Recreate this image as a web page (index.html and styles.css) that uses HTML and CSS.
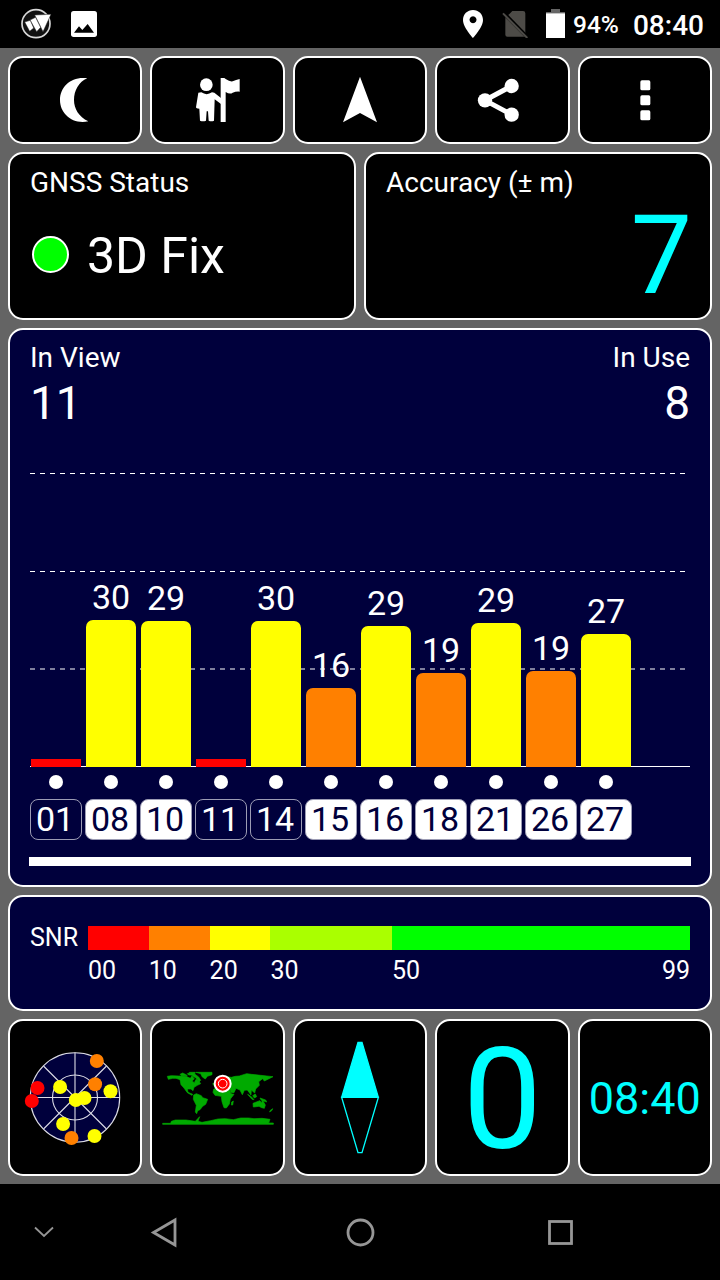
FILE: index.html
```html
<!DOCTYPE html>
<html lang="en">
<head>
    <meta charset="UTF-8">
    <meta name="viewport" content="width=device-width, initial-scale=1.0">
    <title>GNSS Status</title>
    <link rel="stylesheet" href="styles.css">
</head>
<body>
    <header class="status-bar">
        <svg class="icon-logo" width="32" height="32" viewBox="0 0 96 96">
            <circle cx="48" cy="47" r="42" fill="#111" stroke="#d8d8d8" stroke-width="5"/>
            <path d="M14 42 L31 37 L41 60 L29 70Z M30 36 L47 28 L62 58 L50 71Z M44 21 L93 19 L69 71Z" fill="#fff" stroke="#222" stroke-width="1.5"/>
        </svg>
        <svg class="icon-image" width="26" height="26" viewBox="0 0 78 78">
            <rect width="78" height="78" rx="8" fill="#fff"/>
            <path d="M9 65 L24 46 L34 57 L50 39 L69 65Z" fill="#000"/>
        </svg>
        <div class="status-right">
            <svg class="icon-pin" width="20" height="28" viewBox="0 0 60 84">
                <path d="M30 0 C13 0 0 13 0 30 C0 52 30 84 30 84 C30 84 60 52 60 30 C60 13 47 0 30 0Z M30 40 A10.500 10.500 0 1 1 30.100 40Z" fill="#fff" fill-rule="evenodd"/>
            </svg>
            <svg class="icon-sim" width="26" height="28" viewBox="0 0 78 84">
                <path d="M10 22 L70 82 V10 Q70 3 63 3 H31 L23 11Z M10 23 V74 Q10 80 16 80 H67Z" fill="#4d4b47"/>
                <path d="M5 7 L79 83" stroke="#000" stroke-width="9"/>
                <path d="M3 10 L76 84" stroke="#4d4b47" stroke-width="6"/>
            </svg>
            <svg class="icon-battery" width="19" height="29" viewBox="0 0 57 87">
                <path d="M15 0 H42 V9 H57 V14 H0 V9 H15Z" fill="#666"/>
                <rect y="13" width="57" height="74" fill="#fff"/>
            </svg>
            <span class="battery-level">94%</span>
            <span class="status-time">08:40</span>
        </div>
    </header>

    <main class="app">
        <div class="row toolbar">
            <button class="card tool" aria-label="Night mode">
                <svg width="48" height="48" viewBox="-1 0 144 144">
                    <path d="M108 7 C60 0 26 32 26 72 C26 112 62 146 111 136 C82 122 68 98 68 72 C68 44 82 18 108 7Z"/>
                </svg>
            </button>
            <button class="card tool" aria-label="Waypoint">
                <svg width="48" height="48" viewBox="2 0 144 144">
                    <circle cx="39" cy="26" r="19"/>
                    <path d="M15 50 L24 49 Q40 60 56 49 L63 50 L83 66 V84 L64 70 L62 134 Q54 138 46 134 L44 106 H40 L38 134 Q29 138 20 134 L18 98 Q8 98 8 94Z"/>
                    <path d="M82 6 H93 L97 9 Q110 18 118 16 Q128 12 139 9 V47 Q128 46 118 50 Q110 56 97 48 V138 H82Z"/>
                </svg>
            </button>
            <button class="card tool" aria-label="Navigate">
                <svg width="48" height="48" viewBox="0 0 144 144">
                    <path d="M72 2 L123 139 L72 111 L21 139Z"/>
                </svg>
            </button>
            <button class="card tool" aria-label="Share">
                <svg width="48" height="48" viewBox="-1 0 144 144">
                    <circle cx="20" cy="73" r="21.500"/>
                    <circle cx="100" cy="30" r="21.500"/>
                    <circle cx="100" cy="116" r="21.500"/>
                    <path d="M100 30 L20 73 L100 116" fill="none" stroke="#fff" stroke-width="15"/>
                </svg>
            </button>
            <button class="card tool" aria-label="More">
                <svg width="48" height="48" viewBox="0 0 144 144">
                    <rect x="58" y="13" width="30" height="30" rx="5"/>
                    <rect x="58" y="58" width="30" height="30" rx="5"/>
                    <rect x="58" y="103" width="30" height="30" rx="5"/>
                </svg>
            </button>
        </div>

        <div class="row summary">
            <section class="card info">
                <h2 class="label">GNSS Status</h2>
                <div class="fix"><span class="fix-dot"></span>3D Fix</div>
            </section>
            <section class="card info">
                <h2 class="label">Accuracy (± m)</h2>
                <div class="accuracy">7</div>
            </section>
        </div>

        <section class="card satellites">
            <div class="counts">
                <div>
                    <div class="label">In View</div>
                    <div class="count">11</div>
                </div>
                <div class="in-use">
                    <div class="label">In Use</div>
                    <div class="count">8</div>
                </div>
            </div>
            <div class="chart">
                <svg class="grid-lines" width="660" height="294" viewBox="0 0 660 294">
                    <path d="M0 1.500 H660 M0 99.500 H660 M0 197 H660" stroke="#fff" stroke-width="1" stroke-dasharray="5 5"/>
                </svg>
                <div class="bars">
                    <div class="sat"><div class="bar red" style="height: 8px"></div></div>
                    <div class="sat"><span class="value">30</span><div class="bar yellow" style="height: 147px"></div></div>
                    <div class="sat"><span class="value">29</span><div class="bar yellow" style="height: 146px"></div></div>
                    <div class="sat"><div class="bar red" style="height: 8px"></div></div>
                    <div class="sat"><span class="value">30</span><div class="bar yellow" style="height: 146px"></div></div>
                    <div class="sat"><span class="value">16</span><div class="bar orange" style="height: 79px"></div></div>
                    <div class="sat"><span class="value">29</span><div class="bar yellow" style="height: 141px"></div></div>
                    <div class="sat"><span class="value">19</span><div class="bar orange" style="height: 94px"></div></div>
                    <div class="sat"><span class="value">29</span><div class="bar yellow" style="height: 144px"></div></div>
                    <div class="sat"><span class="value">19</span><div class="bar orange" style="height: 96px"></div></div>
                    <div class="sat"><span class="value">27</span><div class="bar yellow" style="height: 133px"></div></div>
                </div>
            </div>
            <div class="ids">
                <span class="id">01</span>
                <span class="id used">08</span>
                <span class="id used">10</span>
                <span class="id">11</span>
                <span class="id">14</span>
                <span class="id used">15</span>
                <span class="id used">16</span>
                <span class="id used">18</span>
                <span class="id used">21</span>
                <span class="id used">26</span>
                <span class="id used">27</span>
            </div>
            <div class="scroll-track"></div>
        </section>

        <section class="card snr">
            <span class="snr-label">SNR</span>
            <div class="scale">
                <div class="red"></div>
                <div class="orange"></div>
                <div class="yellow"></div>
                <div class="lime"></div>
                <div class="green"></div>
                <span>00</span>
                <span>10</span>
                <span>20</span>
                <span>30</span>
                <span class="last"><span>50</span><span>99</span></span>
            </div>
        </section>

        <div class="row tiles">
            <div class="card tile">
                <svg width="104" height="104" viewBox="-52 -51.5 104 104">
                    <g fill="#00003c" stroke="#dcdce6" stroke-width="1.1">
                        <circle r="44.700"/>
                        <circle r="22.500"/>
                        <path d="M-45 0 H45 M0 -45 V45 M-31.500 -31.500 L31.500 31.500 M-31.500 31.500 L31.500 -31.500"/>
                    </g>
                    <g fill="#ff8000">
                        <circle cx="21.800" cy="-36.500" r="7"/>
                        <circle cx="20.100" cy="-13.200" r="7"/>
                        <circle cx="-3.500" cy="40.500" r="7"/>
                    </g>
                    <g fill="#ffff00">
                        <circle cx="35.500" cy="-6.200" r="7"/>
                        <circle cx="-14.900" cy="-10.500" r="7"/>
                        <circle cx="0.800" cy="2.500" r="7"/>
                        <circle cx="9.500" cy="0.500" r="7"/>
                        <circle cx="-11.900" cy="26.500" r="7"/>
                        <circle cx="19.500" cy="38.500" r="7"/>
                    </g>
                    <g fill="#ff0000">
                        <circle cx="-37.500" cy="-9.500" r="7"/>
                        <circle cx="-43.200" cy="3.500" r="7"/>
                    </g>
                </svg>
            </div>
            <div class="card tile">
                <svg width="112" height="55" viewBox="50 165 336 165">
                    <g fill="#00aa00" stroke="#00aa00" stroke-width="2">
                        <!-- Americas -->
                        <path d="M66 184 L78 182 L100 183 L122 184 L135 190 L140 182 L147 192 L140 198 L147 203 L152 193 L160 197 L166 206 L156 211 L146 217 L143 227 L137 222 L126 222 L128 232 L142 238 L140 241 L126 233 L116 219 L107 209 L104 194 L92 190 L82 190 L69 193Z"/>
                        <path d="M104 178 L112 174 L122 179 L126 182 L108 182Z M126 176 L132 174 L140 180 L130 180Z M132 172 L150 172 L148 177 L160 186 L166 196 L162 200 L152 189 L143 184Z M152 172 H200 V179 L186 184 L180 192 L171 186 L166 176Z"/>
                        <path d="M145 240 L153 236 L168 242 L172 248 L187 253 L181 268 L172 274 L164 284 L157 287 L154 296 L150 291 L153 271 L144 253Z"/>
                        <!-- Europe, Asia, Africa -->
                        <path d="M202 206 L213 201 L223 191 L236 184 L258 187 L270 184 L282 183 L304 176 L318 178 L346 181 L383 185 L371 191 L357 198 L352 191 L340 200 L342 211 L331 222 L328 234 L318 225 L317 240 L306 225 L297 226 L291 239 L284 225 L272 220 L266 233 L257 232 L252 219 L240 214 L224 213 L207 214Z"/>
                        <path d="M205 223 L216 215 L235 218 L251 221 L257 236 L266 238 L255 252 L252 267 L243 279 L236 278 L230 260 L228 244 L209 241 L203 232Z M259 261 L264 258 L262 270 L258 270Z"/>
                        <!-- Oceania -->
                        <path d="M307 238 L318 245 L326 254 L320 253Z M322 242 L330 237 L334 245 L327 249Z M344 249 L361 255 L364 261 L348 256Z M323 265 L333 261 L344 257 L348 263 L352 256 L360 270 L357 280 L349 278 L341 274 L324 276Z M374 287 L382 281 L380 286 L373 291Z"/>
                        <!-- Antarctica -->
                        <path d="M52 325 H76 L78 319 L90 315 L122 315 L150 319 L163 305 L158 319 L170 322 L196 317 L218 312 L240 311 L264 314 L286 309 L310 309 L326 311 L350 310 L374 313 L370 324 H384 V328 H52Z"/>
                    </g>
                    <circle cx="232" cy="206" r="24" fill="#ff0000" stroke="#fff" stroke-width="6"/>
                    <circle cx="232" cy="206" r="13" fill="none" stroke="#fff" stroke-width="3"/>
                </svg>
            </div>
            <div class="card tile">
                <svg width="40" height="114" viewBox="0 0 120 342">
                    <g stroke="#00ffff" stroke-width="4">
                        <path d="M54 4 H66 L115 169 H5Z" fill="#00ffff"/>
                        <path d="M5 169 H115 L66 335 H54Z" fill="none"/>
                    </g>
                </svg>
            </div>
            <div class="card tile heading">0</div>
            <div class="card tile clock">08:40</div>
        </div>
    </main>

    <nav class="nav-bar">
        <svg width="20" height="12" viewBox="0 0 20 12"><path d="M1 1.500 L10 10 L19 1.500"/></svg>
        <svg class="thick" width="28" height="32" viewBox="0 0 28 32"><path d="M25 4 V29 L3.500 16.500Z"/></svg>
        <svg class="thick" width="30" height="30" viewBox="0 0 30 30"><circle cx="15.500" cy="15.500" r="12.500"/></svg>
        <svg class="thick" width="30" height="30" viewBox="0 0 30 30"><rect x="4.500" y="4.500" width="22" height="22"/></svg>
    </nav>
</body>
</html>
```

FILE: styles.css
```css
body {
    margin: 0;
    width: 720px;
    height: 1280px;
    display: flex;
    flex-direction: column;
    background: #000;
    color: #fff;
    font-family: Roboto, "Liberation Sans", sans-serif;
    overflow: hidden;
}

/* status bar */
.status-bar {
    height: 48px;
    box-sizing: border-box;
    padding: 0 16px 0 20px;
    display: flex;
    align-items: center;
    font-weight: 500;
}
.icon-image {
    margin-left: 19px;
}
.status-right {
    margin-left: auto;
    display: flex;
    align-items: center;
}
.icon-sim {
    margin-left: 19px;
}
.icon-battery {
    margin: 0 8px 2px 18px;
}
.battery-level {
    padding-top: 1px;
    font-size: 24.5px;
    width: 60px;
}
.status-time {
    padding-top: 2px;
    font-size: 28px;
}

/* main area */
.app {
    height: 1136px;
    box-sizing: border-box;
    padding: 8px;
    display: grid;
    grid-template-rows: 88px 167.5px 559.5px 116px 157px;
    gap: 8px;
    background: #646464;
}
.row {
    display: grid;
    gap: 8px;
}
.toolbar,
.tiles {
    grid-template-columns: repeat(5, 1fr);
}
.summary {
    grid-template-columns: 1fr 1fr;
}
.card {
    min-width: 0;
    box-sizing: border-box;
    border: 2px solid #fff;
    border-radius: 15px;
    background: #000;
}
.tool,
.tile {
    display: flex;
    justify-content: center;
    align-items: center;
    padding: 0;
}
.tool svg {
    fill: #fff;
    overflow: visible;
}
.label {
    margin: 0;
    font-size: 28px;
    font-weight: 400;
    line-height: 32px;
}

.info {
    padding: 13px 20px 0;
}
.fix {
    display: flex;
    align-items: center;
    margin-top: 27px;
    font-size: 50px;
    line-height: 60px;
}
.fix-dot {
    width: 33px;
    height: 33px;
    margin: -4px 18px 0 2px;
    border: 2px solid #fff;
    border-radius: 50%;
    background: #00ff00;
}
.accuracy {
    margin: 3px -2px 0 0;
    text-align: right;
    color: #00ffff;
    font-size: 109px;
    line-height: 109px;
}

/* satellites */
.satellites {
    padding: 12.5px 20px 0;
    background: #00003c;
}
.counts {
    display: flex;
    justify-content: space-between;
    height: 130px;
}
.in-use {
    text-align: right;
}
.count {
    font-size: 46px;
    line-height: 54px;
    margin-top: 2px;
}
.chart {
    display: grid;
    height: 294px;
    border-bottom: 1px solid #fff;
}
.grid-lines,
.bars {
    grid-area: 1 / 1;
}
/* one pixel taller than the chart, so the bars stand on the axis line */
.bars {
    display: flex;
    gap: 5px;
    padding-left: 1px;
    height: 295px;
}
.sat {
    width: 50px;
    display: flex;
    flex-direction: column;
    justify-content: flex-end;
    text-align: center;
}
.value {
    font-size: 34px;
    line-height: 40px;
    margin-bottom: 3px;
}
.bar {
    border-radius: 7px 7px 0 0;
}
.bar.red {
    border-radius: 0;
}
.red {
    background: #ff0000;
}
.orange {
    background: #ff8000;
}
.yellow {
    background: #ffff00;
}
.lime {
    background: #aaff00;
}
.green {
    background: #00ff00;
}
.ids {
    display: flex;
    gap: 3px;
    padding-top: 32px;
}
.id {
    width: 52px;
    height: 41px;
    box-sizing: border-box;
    padding-right: 2px;
    border: 1px solid #9c9cb4;
    border-radius: 8px;
    font-size: 34px;
    line-height: 38px;
    text-align: center;
}
.id::before {
    content: "";
    display: block;
    width: 14px;
    height: 14px;
    margin: -25px 0 11px 18px;
    border-radius: 50%;
    background: #fff;
}
.id.used {
    background: #fff;
    color: #00003c;
}
.id.used::before {
    background: #fff;
}
.scroll-track {
    height: 9px;
    margin: 17px -1px 0;
    background: #fff;
}

/* snr legend */
.snr {
    display: flex;
    padding: 29px 20px 0;
    background: #00003c;
    font-size: 25px;
    line-height: 24px;
}
.snr-label {
    width: 58px;
}
.scale {
    flex: 1;
    display: grid;
    grid-template-columns: 10fr 10fr 10fr 20fr 49fr;
    grid-template-rows: 24px 40px;
    line-height: 42px;
}
.last {
    display: flex;
    justify-content: space-between;
}

.heading,
.clock {
    color: #00ffff;
    line-height: 1;
}
.heading {
    padding-top: 3px;
    font-size: 141px;
}
.clock {
    padding-top: 2px;
    font-size: 45px;
}

/* navigation */
.nav-bar {
    height: 96px;
    display: grid;
    grid-template-columns: 88px 152px 240px 160px;
    place-items: center;
    fill: none;
    stroke: #969696;
    stroke-width: 1.8px;
}
.thick {
    stroke-width: 2.8px;
}
```
